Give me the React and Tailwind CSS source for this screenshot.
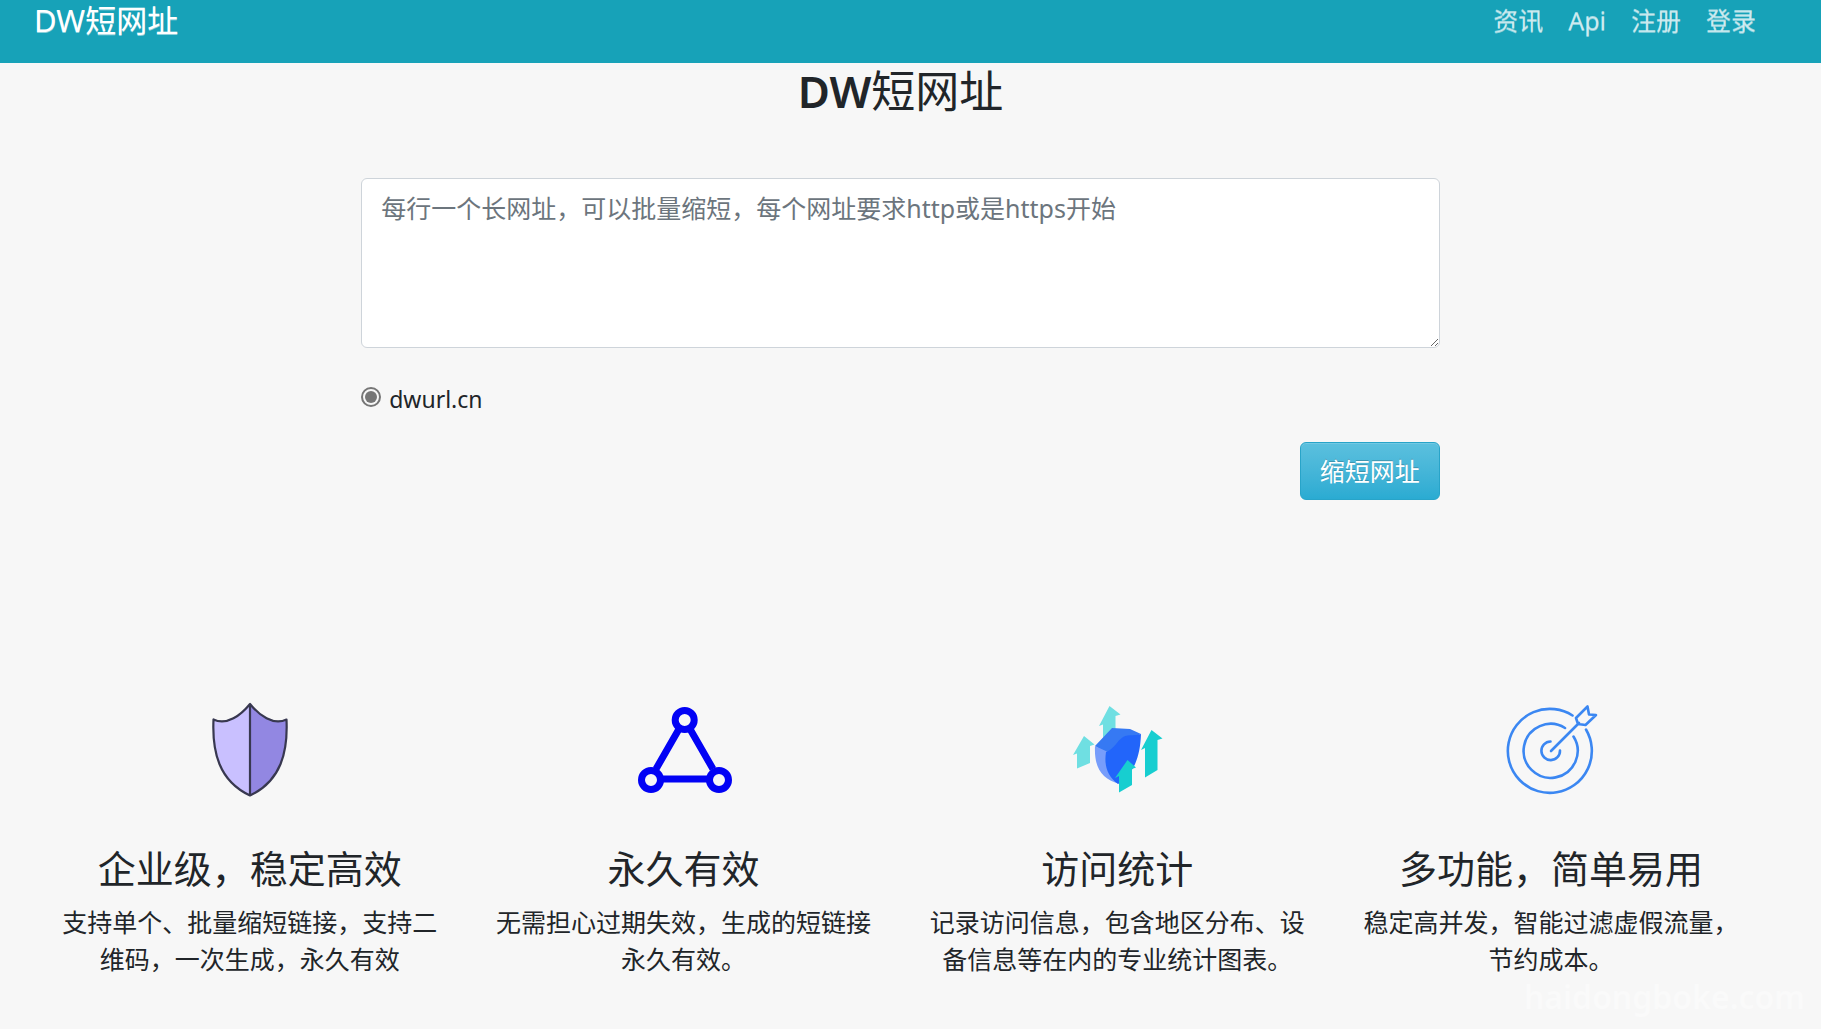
import React from "react";

const ShieldIcon = () => (
  <svg viewBox="0 0 120 120" className="size-30" aria-hidden="true">
    <path d="M60 14C51 25 37 36 23.500 29.500C22 62 29 91 60 105.500Z" fill="#c9c0ff" />
    <path d="M60 14C69 25 83 36 96.500 29.500C98 62 91 91 60 105.500Z" fill="#9287e2" />
    <path
      d="M60 14C51 25 37 36 23.500 29.500C22 62 29 91 60 105.500C91 91 98 62 96.500 29.500C83 36 69 25 60 14ZV105.500"
      fill="none"
      stroke="#383850"
      strokeWidth="2.200"
      strokeLinejoin="round"
    />
  </svg>
);

const TriangleIcon = () => (
  <svg viewBox="3 0 120 120" className="size-30" aria-hidden="true">
    <g fill="none" stroke="#0202f5" strokeWidth="7">
      <path d="M58 39L35 79M69 39L92 79M42 89H86" />
      <circle cx="63.700" cy="30" r="9.500" />
      <circle cx="30" cy="90" r="9.500" />
      <circle cx="98" cy="90" r="9.500" />
    </g>
  </svg>
);

const StatsIcon = () => (
  <svg viewBox="-3 0 120 120" className="size-30" aria-hidden="true">
    <path d="M49.500 16L60.500 24.500L55.500 26V52L43 56V34.500L39 36Z" fill="#6fdfe2" />
    <path d="M24 46L34.500 54.500L30 56V73L17 78.500V63.500L13 65Z" fill="#6fdfe2" />
    <path d="M35 56L52 38L70 39L81 44L66 50L47 64Z" fill="#3679f3" />
    <path d="M35 56L48 62C46 74 49 86 60 94C41 89 34 77 35 56Z" fill="#779dfb" />
    <path d="M46 62C54 59 57 51 63 47C69 44 76 46 81 44C80 68 74 83 58 94C47 86 44 75 46 62Z" fill="#2265fa" />
    <path d="M91.500 40L102.500 48.500L97.500 50V80L85 87.500V58L81 60Z" fill="#17ced0" />
    <path d="M67.500 70L76 77.500L72 79V95L59 102.500V86L55 88Z" fill="#17ced0" />
  </svg>
);

const TargetIcon = () => (
  <svg viewBox="0 0 120 120" className="size-30" aria-hidden="true">
    <g fill="none" stroke="#3b87f2" strokeWidth="2.600" strokeLinecap="round" strokeLinejoin="round">
      <path d="M81.500 25.500A42 42 0 1 0 95 39.500" />
      <path d="M74 38A27 27 0 1 0 82.500 46.500" />
      <path d="M59.500 51.500A9.300 9.300 0 1 0 69 60.500" />
      <path d="M60 61L88 33M85 28L96.500 16.500L98 24.500L105 25L94.500 35L87 34Z" />
    </g>
  </svg>
);

const navLinks = ["资讯", "Api", "注册", "登录"];

const features = [
  {
    icon: <ShieldIcon />,
    title: "企业级，稳定高效",
    text: "支持单个、批量缩短链接，支持二维码，一次生成，永久有效",
  },
  {
    icon: <TriangleIcon />,
    title: "永久有效",
    text: "无需担心过期失效，生成的短链接永久有效。",
  },
  {
    icon: <StatsIcon />,
    title: "访问统计",
    text: "记录访问信息，包含地区分布、设备信息等在内的专业统计图表。",
  },
  {
    icon: <TargetIcon />,
    title: "多功能，简单易用",
    text: "稳定高并发，智能过滤虚假流量，节约成本。",
  },
];

const App = () => {
  return (
    <div
      lang="zh-CN"
      className="relative min-h-screen bg-[#f7f7f7] font-['Noto_Sans','Noto_Sans_CJK_SC',sans-serif] text-[25px] leading-[37px] text-[#212529]"
    >
      <header className="flex items-start justify-between bg-[#17a2b8] pr-[65px] pb-[23px] pl-[34px] text-shadow-[0_1px_0_rgba(255,255,255,0.5)]">
        <a href="#" className="text-[31px] leading-10 text-white">
          DW短网址
        </a>
        <nav className="flex gap-[25px] leading-10 text-white/60">
          {navLinks.map((name) => (
            <a key={name} href="#">
              {name}
            </a>
          ))}
        </nav>
      </header>

      <main className="pr-5">
        <h1 className="pt-0.5 text-center text-[44px] leading-[52px]">
          <span className="font-semibold">DW</span>短网址
        </h1>

        <form className="mx-auto mt-[61px] w-3/5 px-px" onSubmit={(e) => e.preventDefault()}>
          <textarea
            aria-label="长网址"
            placeholder="每行一个长网址，可以批量缩短，每个网址要求http或是https开始"
            className="block h-[170px] w-full resize rounded-md border border-[#ced4da] bg-white px-[19px] py-[11px] placeholder:text-[#6c757d]"
          />
          <div className="mt-[33px] flex items-start gap-2">
            <input
              id="domain"
              type="radio"
              name="domain"
              defaultChecked
              className="mt-[6px] size-5 appearance-none rounded-full border-2 border-[#767676] bg-[#767676] bg-clip-content p-[2px]"
            />
            <label htmlFor="domain" className="text-[23px]">
              dwurl.cn
            </label>
          </div>
          <div className="mt-6 flex justify-end">
            <button
              type="submit"
              className="rounded-md border border-[#28a4c9] bg-linear-to-b from-[#5bc0de] to-[#2aabd2] px-[19px] py-[10px] leading-9 text-white inset-shadow-[0_1px_0_rgba(255,255,255,0.15)] text-shadow-[0_-1px_0_rgba(0,0,0,0.2)]"
            >
              缩短网址
            </button>
          </div>
        </form>

        <section className="mt-[190px] grid grid-cols-4 px-[33px]">
          {features.map((item) => (
            <div key={item.title} className="flex flex-col items-center px-[23px] text-center">
              {item.icon}
              <h2 className="mt-9 text-[38px] leading-[45px]">{item.title}</h2>
              <p className="mt-[13px]">{item.text}</p>
            </div>
          ))}
        </section>
      </main>

      <div className="absolute right-4 bottom-[14px] text-[32px] font-semibold text-[#fafafa]">
        haidongboke.com
      </div>
    </div>
  );
};

export default App;
